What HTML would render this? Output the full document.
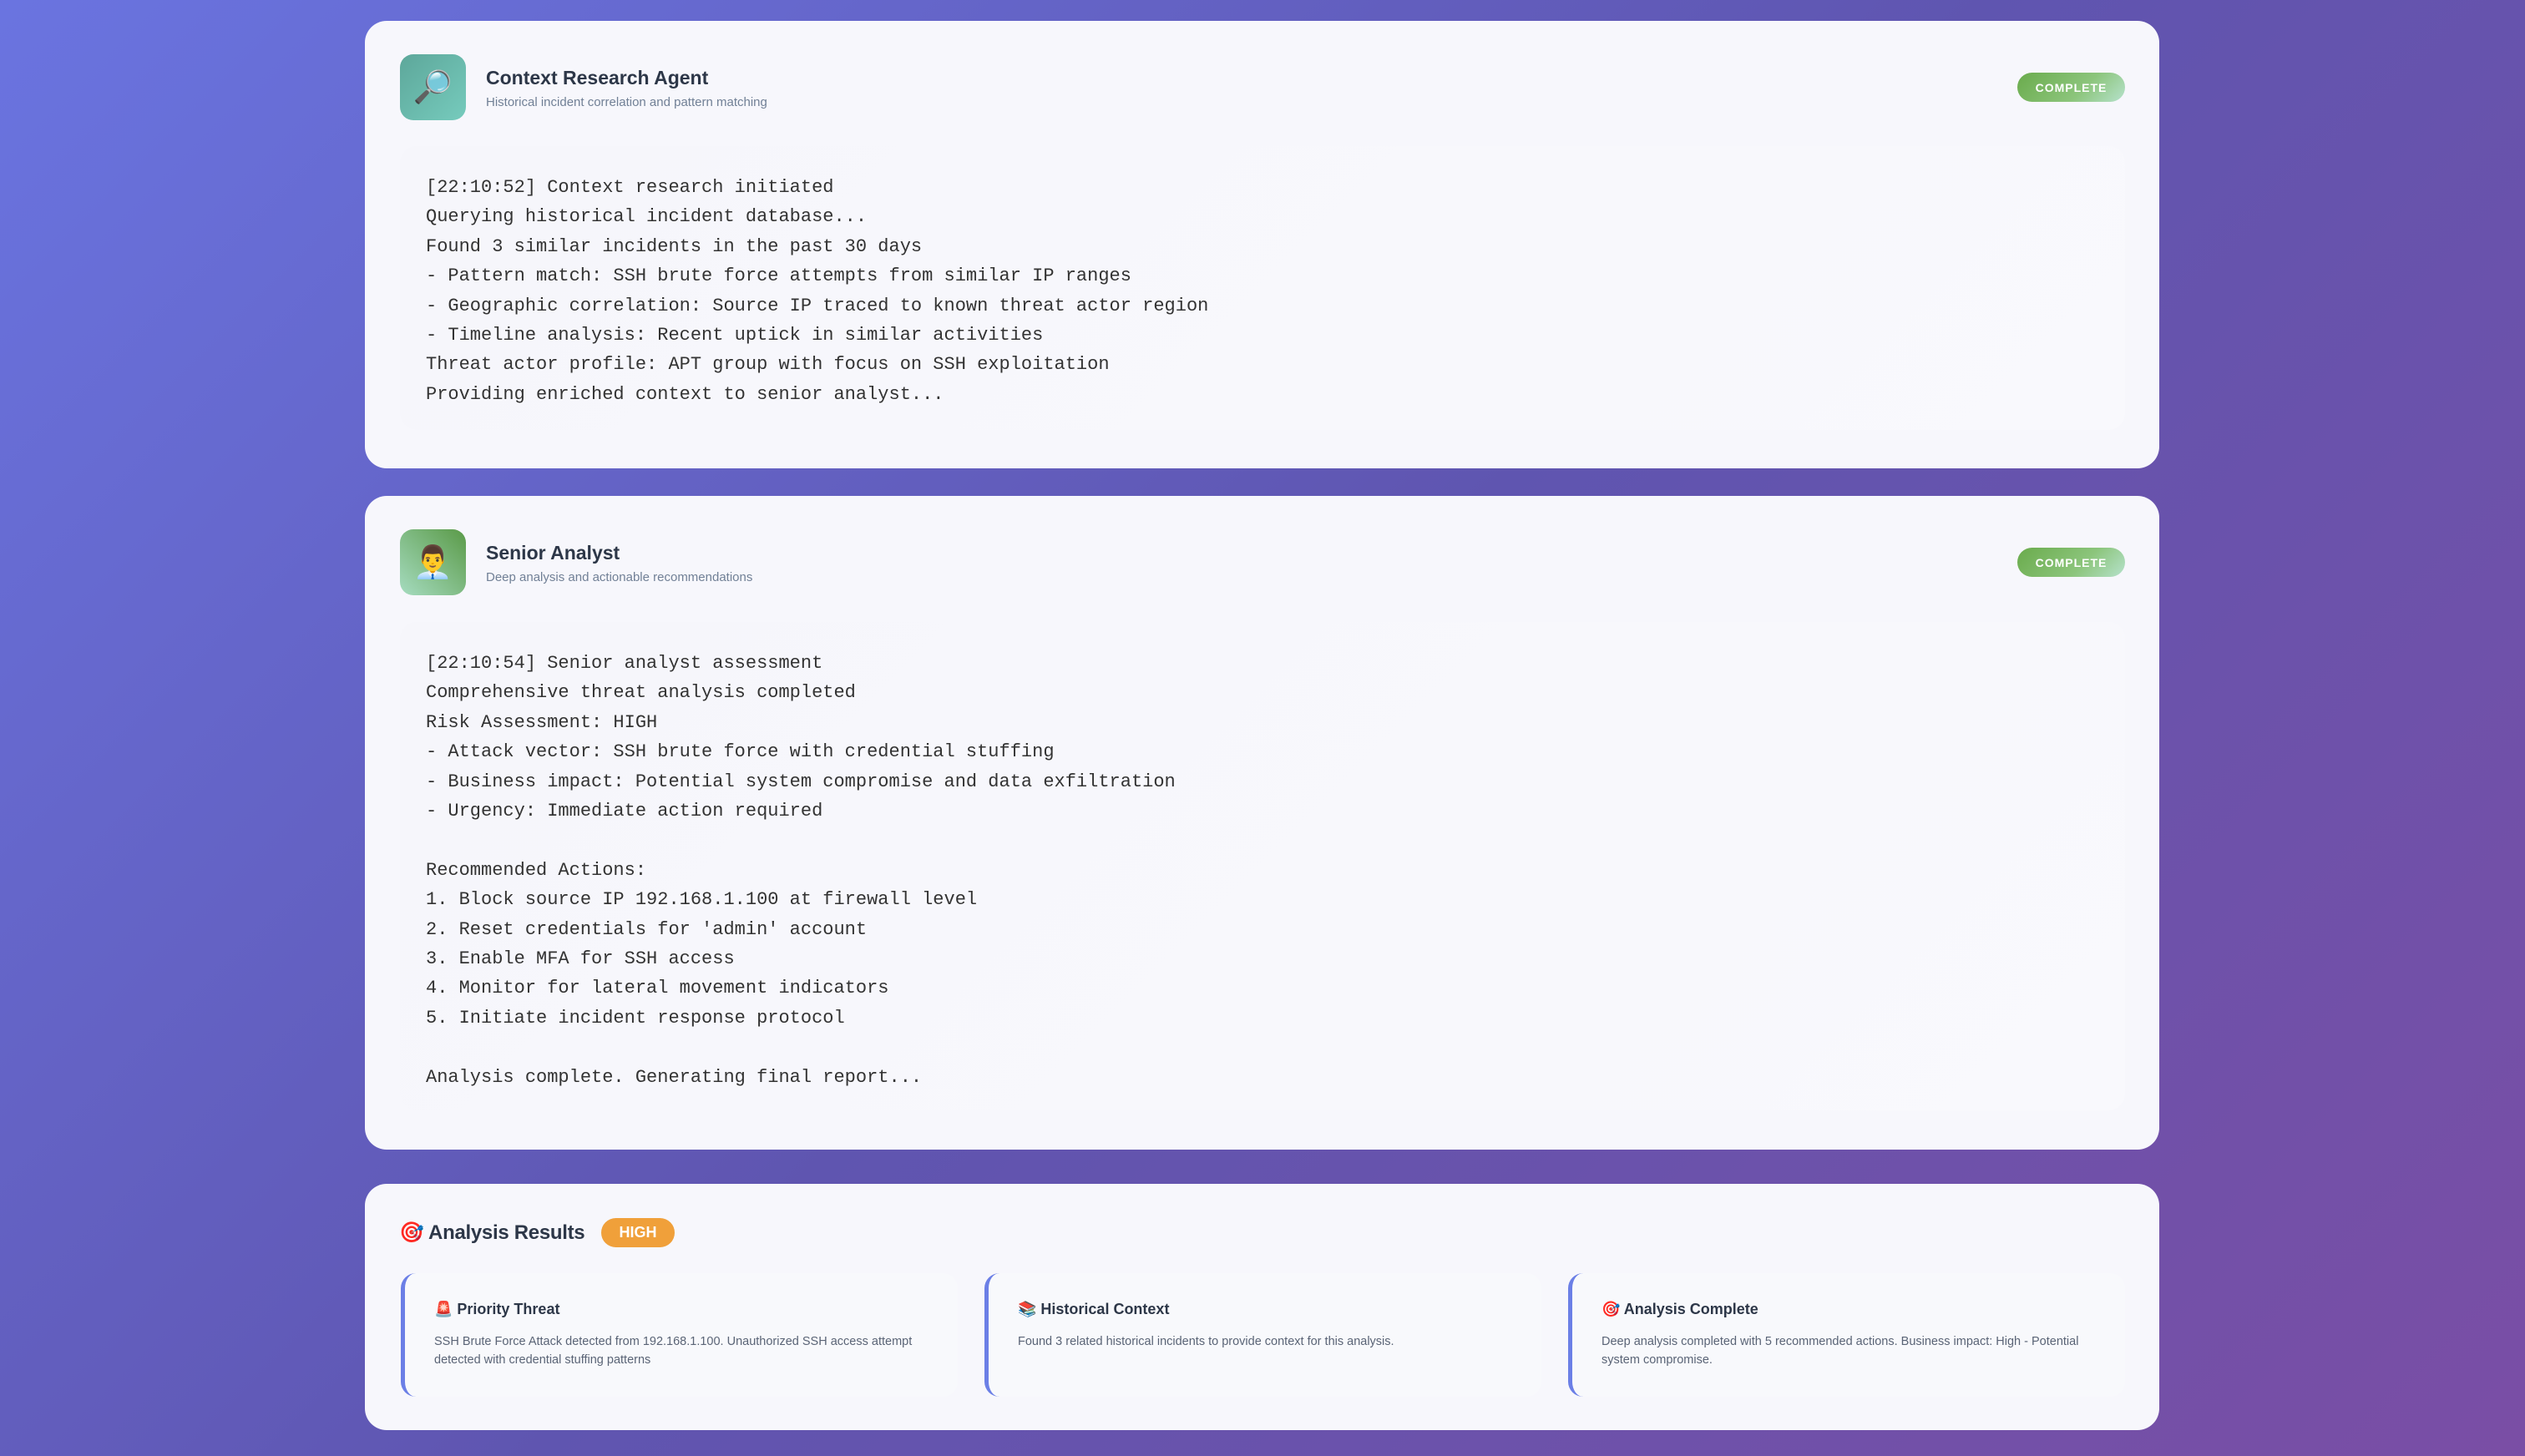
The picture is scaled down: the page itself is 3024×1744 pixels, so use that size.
<!DOCTYPE html>
<html><head><meta charset="utf-8"><style>
*{margin:0;padding:0;box-sizing:border-box}
html,body{width:3024px;height:1744px;overflow:hidden}
body{background:linear-gradient(135deg,#6a74e0 0%,#5f55b0 50%,#7a4ea5 100%);font-family:"Liberation Sans","Noto Sans CJK SC",sans-serif;position:relative}
.card{position:absolute;left:437px;width:2149px;background:#f7f7fc;border-radius:26px}
.icon{position:absolute;left:42px;width:79px;height:79px;border-radius:16px;display:flex;align-items:center;justify-content:center;font-size:38px}
.title{position:absolute;left:145px;font-size:23px;font-weight:bold;color:#2d3748}
.sub{position:absolute;left:145px;font-size:15px;color:#718096}
.badge{position:absolute;left:1979px;width:129px;height:35px;border-radius:18px;background:linear-gradient(135deg,#6aab4c,#8cc57c 60%,#b6e2cc);color:#fff;font-weight:bold;font-size:14px;letter-spacing:1px;display:flex;align-items:center;justify-content:center}
.log{position:absolute;left:42px;width:2066px;background:linear-gradient(135deg,#f6f6fb,#f9f9fd);border-radius:20px;font-family:"Liberation Mono",monospace;font-size:22px;line-height:35.4px;color:#333;white-space:pre;padding-left:31px}
.sc{position:absolute;top:107px;width:667px;height:148px;background:#f8f9fc;border-radius:18px;border-left:5px solid #6b7fe6}
.sc h4{position:absolute;left:35px;top:33px;font-size:18px;color:#2d3748}
.sc p{position:absolute;left:35px;top:71px;right:30px;font-size:14.5px;line-height:22px;color:#5a6476}
</style></head><body>

<div class="card" style="top:25px;height:536px">
 <div class="icon" style="top:40px;background:linear-gradient(135deg,#5da79a,#76cbbd)">🔎</div>
 <div class="title" style="top:55px">Context Research Agent</div>
 <div class="sub" style="top:89px">Historical incident correlation and pattern matching</div>
 <div class="badge" style="top:62px">COMPLETE</div>
 <div class="log" style="top:150px;height:340px;padding-top:32px">[22:10:52] Context research initiated
Querying historical incident database...
Found 3 similar incidents in the past 30 days
- Pattern match: SSH brute force attempts from similar IP ranges
- Geographic correlation: Source IP traced to known threat actor region
- Timeline analysis: Recent uptick in similar activities
Threat actor profile: APT group with focus on SSH exploitation
Providing enriched context to senior analyst...</div>
</div>

<div class="card" style="top:594px;height:783px">
 <div class="icon" style="top:40px;background:linear-gradient(225deg,#5a9a48,#a6dcc0)">👨‍💼</div>
 <div class="title" style="top:55px">Senior Analyst</div>
 <div class="sub" style="top:89px">Deep analysis and actionable recommendations</div>
 <div class="badge" style="top:62px">COMPLETE</div>
 <div class="log" style="top:151px;height:585px;padding-top:32px">[22:10:54] Senior analyst assessment
Comprehensive threat analysis completed
Risk Assessment: HIGH
- Attack vector: SSH brute force with credential stuffing
- Business impact: Potential system compromise and data exfiltration
- Urgency: Immediate action required

Recommended Actions:
1. Block source IP 192.168.1.100 at firewall level
2. Reset credentials for 'admin' account
3. Enable MFA for SSH access
4. Monitor for lateral movement indicators
5. Initiate incident response protocol

Analysis complete. Generating final report...</div>
</div>

<div class="card" style="top:1418px;height:295px">
 <div style="position:absolute;left:41px;top:44px;font-size:24px;font-weight:bold;color:#2d3748;letter-spacing:-0.3px">🎯 Analysis Results</div>
 <div style="position:absolute;left:283px;top:41px;width:88px;height:35px;border-radius:18px;background:#f0a03a;color:#fff;font-weight:bold;font-size:18px;display:flex;align-items:center;justify-content:center">HIGH</div>
 <div class="sc" style="left:43px"><h4>🚨 Priority Threat</h4><p>SSH Brute Force Attack detected from 192.168.1.100. Unauthorized SSH access attempt detected with credential stuffing patterns</p></div>
 <div class="sc" style="left:742px"><h4>📚 Historical Context</h4><p>Found 3 related historical incidents to provide context for this analysis.</p></div>
 <div class="sc" style="left:1441px"><h4>🎯 Analysis Complete</h4><p>Deep analysis completed with 5 recommended actions. Business impact: High - Potential system compromise.</p></div>
</div>
</body></html>
